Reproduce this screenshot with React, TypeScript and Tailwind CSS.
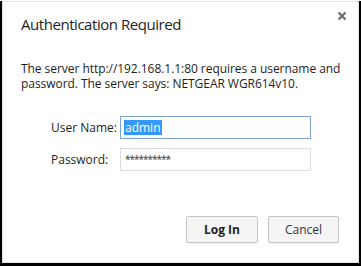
export default function App() {
  return (
    <div className="w-[361px] h-[266px] bg-black p-0">
      <div
        className="relative ml-[2px] mt-[1px] w-[357px] h-[262px] bg-white border border-[#e6e6e6] text-[#1e1e1e]"
        style={{ fontFamily: '"Open Sans", "Noto Sans", sans-serif' }}
      >
        <button className="absolute right-[8px] top-[6px] w-[16px] h-[16px] flex items-center justify-center text-[#777]">
          <svg width="10" height="10" viewBox="0 0 10 10">
            <path d="M1.5 1.5 L8.5 8.5 M8.5 1.5 L1.5 8.5" stroke="#6b6b6b" strokeWidth="2.2" />
          </svg>
        </button>

        <div className="pl-[18px] pt-[11px]">
          <h1 className="text-[15px] font-normal leading-[22px] tracking-[-0.45px]">Authentication Required</h1>
          <p className="mt-[26px] text-[12px] leading-[15px] tracking-[-0.05px] w-[330px]">
            The server http://192.168.1.1:80 requires a username and
            <br />
            password. The server says: NETGEAR WGR614v10.
          </p>
        </div>

        <div className="mt-[25px] flex flex-col gap-[9px]">
          <div className="flex items-center">
            <label className="w-[117px] pl-[48px] text-[12px]">User Name:</label>
            <div className="w-[191px] h-[23px] border border-[#7da2ce] flex items-center px-[3px]">
              <span className="bg-[#3399ff] text-white text-[12px] leading-[15px] px-[1px]">admin</span>
            </div>
          </div>
          <div className="flex items-center">
            <label className="w-[117px] pl-[48px] text-[12px]">Password:</label>
            <div className="w-[191px] h-[23px] border border-[#dcdcdc] flex items-center px-[4px] text-[10px] tracking-[-1px] text-[#333]">
              **********
            </div>
          </div>
        </div>

        <div className="absolute right-[19px] bottom-[19px] flex gap-[10px]">
          <button className="w-[72px] h-[27px] border border-[#c6c6c6] rounded-[2px] bg-[#f5f5f5] text-[12px] font-bold shadow-[0_1px_0_rgba(0,0,0,0.05)]">
            Log In
          </button>
          <button className="w-[71px] h-[27px] border border-[#c6c6c6] rounded-[2px] bg-[#f5f5f5] text-[12px] text-[#333] shadow-[0_1px_0_rgba(0,0,0,0.05)]">
            Cancel
          </button>
        </div>
      </div>
    </div>
  );
}
